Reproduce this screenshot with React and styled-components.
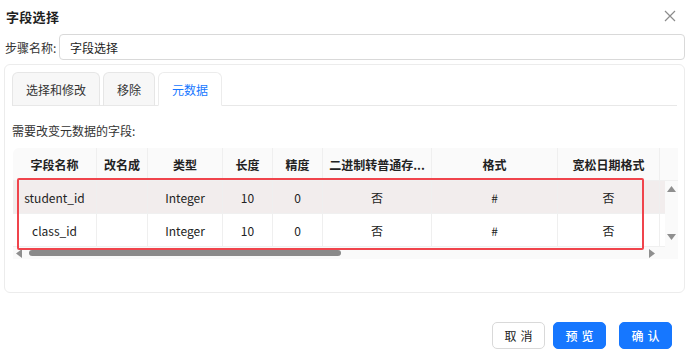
import styled, { createGlobalStyle } from 'styled-components'

const GlobalStyle = createGlobalStyle`
    html, body {
        margin: 0;
        padding: 0;
        background: #ffffff;
    }
    body {
        font-family: "Noto Sans CJK SC", "Noto Sans", sans-serif;
        color: #222;
    }
`

const columns = [
    { key: 'name', title: '字段名称', width: 84 },
    { key: 'rename', title: '改名成', width: 51 },
    { key: 'type', title: '类型', width: 75 },
    { key: 'length', title: '长度', width: 50 },
    { key: 'precision', title: '精度', width: 50 },
    { key: 'binary', title: '二进制转普通存...', width: 109 },
    { key: 'format', title: '格式', width: 126 },
    { key: 'lenient', title: '宽松日期格式', width: 102 },
]

const rows = [
    { name: 'student_id', rename: '', type: 'Integer', length: '10', precision: '0', binary: '否', format: '#', lenient: '否' },
    { name: 'class_id', rename: '', type: 'Integer', length: '10', precision: '0', binary: '否', format: '#', lenient: '否' },
]

const Dialog = styled.div`
    width: 690px;
    height: 362px;
    display: flex;
    flex-direction: column;
    box-sizing: border-box;
`

const Header = styled.div`
    height: 32px;
    display: flex;
    align-items: center;
    justify-content: space-between;
    padding: 0 13px 0 6px;
`

const Title = styled.h1`
    margin: 0;
    font-size: 13px;
    font-weight: 700;
    color: #1f1f1f;
    letter-spacing: 0.3px;
`

const CloseBtn = styled.button`
    width: 14px;
    height: 14px;
    padding: 0;
    border: none;
    background: none;
    display: flex;
    align-items: center;
    justify-content: center;
    cursor: pointer;
`

const StepRow = styled.div`
    display: flex;
    align-items: center;
    margin: 2px 5px 0 5px;
`

const StepLabel = styled.label`
    width: 54px;
    font-size: 12px;
    color: #333;
`

const StepInput = styled.div`
    flex: 1;
    height: 26px;
    box-sizing: border-box;
    border: 1px solid #d9d9d9;
    border-radius: 4px;
    display: flex;
    align-items: center;
    padding-left: 10px;
    font-size: 12px;
    color: #222;
`

const Panel = styled.div`
    margin: 4px 5px 0 4px;
    height: 229px;
    box-sizing: border-box;
    border: 1px solid #ececec;
    border-radius: 6px;
    padding: 7px 7px 0 7px;
    display: flex;
    flex-direction: column;
`

const TabBar = styled.div`
    display: flex;
    gap: 3px;
    border-bottom: 1px solid #e8e8e8;
    height: 33px;
`

const Tab = styled.div`
    height: 34px;
    box-sizing: border-box;
    padding: 0 13px;
    display: flex;
    align-items: center;
    font-size: 12px;
    border: 1px solid ${props => props.active ? '#ececec' : '#e6e6e6'};
    border-bottom: ${props => props.active ? '1px solid #fff' : '1px solid #e8e8e8'};
    border-radius: 6px 6px 0 0;
    background: ${props => props.active ? '#ffffff' : '#f7f7f7'};
    color: ${props => props.active ? '#1677ff' : '#333'};
`

const Hint = styled.div`
    margin-top: 16px;
    font-size: 12px;
    color: #333;
    line-height: 18px;
`

const TableBox = styled.div`
    position: relative;
    margin-top: 8px;
    width: 665px;
    margin-left: 1px;
`

const HeadRow = styled.div`
    display: flex;
    height: 33px;
    background: #fafafa;
    border-radius: 6px 6px 0 0;
    border-bottom: 1px solid #f0f0f0;
    box-sizing: border-box;
`

const HeadCell = styled.div`
    width: ${props => props.w}px;
    flex: none;
    box-sizing: border-box;
    display: flex;
    align-items: center;
    justify-content: center;
    font-size: 12px;
    font-weight: 700;
    color: #222;
    white-space: nowrap;
    overflow: hidden;
    border-right: 1px solid #efefef;
`

const Gutter = styled.div`
    flex: 1;
    background: #fafafa;
`

const BodyWrap = styled.div`
    display: flex;
`

const BodyRows = styled.div`
    width: 652px;
`

const Row = styled.div`
    display: flex;
    height: 33px;
    background: ${props => props.hover ? '#f2eded' : '#ffffff'};
    border-bottom: 1px solid #f0f0f0;
    box-sizing: border-box;
`

const Cell = styled.div`
    width: ${props => props.w}px;
    flex: none;
    box-sizing: border-box;
    display: flex;
    align-items: center;
    justify-content: center;
    font-size: 12px;
    color: #222;
    border-right: 1px solid #efefef;
`

const VScroll = styled.div`
    flex: 1;
    background: #fafafa;
    display: flex;
    flex-direction: column;
    justify-content: space-between;
    align-items: center;
    padding: 4px 0 5px;
`

const HScroll = styled.div`
    height: 12px;
    display: flex;
    align-items: center;
    background: #fafafa;
    padding: 0 2px;
    gap: 5px;
`

const Thumb = styled.div`
    width: 312px;
    height: 6px;
    border-radius: 3px;
    background: #8a8a8a;
`

const ScrollSpacer = styled.div`
    flex: 1;
`

const Highlight = styled.div`
    position: absolute;
    left: 4px;
    top: 30px;
    width: 627px;
    height: 72px;
    box-sizing: border-box;
    border: 2px solid #f0444c;
    border-radius: 2px;
    pointer-events: none;
`

const Footer = styled.div`
    margin-top: auto;
    height: 39px;
    display: flex;
    justify-content: flex-end;
    align-items: flex-start;
    padding-right: 18px;
    margin-bottom: 1px;
`

const Button = styled.button`
    width: 53px;
    height: 27px;
    margin-left: ${props => props.gap}px;
    box-sizing: border-box;
    border-radius: 5px;
    font-family: "Noto Sans CJK SC", "Noto Sans", sans-serif;
    font-size: 12px;
    letter-spacing: 4px;
    text-indent: 4px;
    cursor: pointer;
    border: 1px solid ${props => props.primary ? '#1677ff' : '#d9d9d9'};
    background: ${props => props.primary ? '#1677ff' : '#ffffff'};
    color: ${props => props.primary ? '#ffffff' : '#222'};
    font-weight: ${props => props.primary ? 500 : 400};
`

const Arrow = ({ dir }) => {
    const pts = {
        up: '0,7 4.5,1 9,7',
        down: '0,1 4.5,7 9,1',
        left: '7,0 1,4.5 7,9',
        right: '1,0 7,4.5 1,9',
    }[dir]
    return <svg width="9" height="9" viewBox="0 0 9 9"><polygon points={pts} fill="#8f8f8f" /></svg>
}

const App = () => {
    return <>
        <GlobalStyle />
        <Dialog>
            <Header>
                <Title>字段选择</Title>
                <CloseBtn>
                    <svg width="12" height="12" viewBox="0 0 12 12">
                        <path d="M1 1 L11 11 M11 1 L1 11" stroke="#8c8c8c" strokeWidth="1.2" fill="none" />
                    </svg>
                </CloseBtn>
            </Header>
            <StepRow>
                <StepLabel>步骤名称:</StepLabel>
                <StepInput>字段选择</StepInput>
            </StepRow>
            <Panel>
                <TabBar>
                    <Tab>选择和修改</Tab>
                    <Tab>移除</Tab>
                    <Tab active>元数据</Tab>
                </TabBar>
                <Hint>需要改变元数据的字段:</Hint>
                <TableBox>
                    <HeadRow>
                        {columns.map(c => <HeadCell key={c.key} w={c.width}>{c.title}</HeadCell>)}
                        <Gutter />
                    </HeadRow>
                    <BodyWrap>
                        <BodyRows>
                            {rows.map((r, i) => <Row key={i} hover={i === 0}>
                                {columns.map(c => <Cell key={c.key} w={c.width}>{r[c.key]}</Cell>)}
                            </Row>)}
                        </BodyRows>
                        <VScroll>
                            <Arrow dir="up" />
                            <Arrow dir="down" />
                        </VScroll>
                    </BodyWrap>
                    <HScroll>
                        <Arrow dir="left" />
                        <Thumb />
                        <ScrollSpacer />
                        <Arrow dir="right" />
                        <div style={{ width: 14 }} />
                    </HScroll>
                    <Highlight />
                </TableBox>
            </Panel>
            <Footer>
                <Button>取消</Button>
                <Button primary gap={8}>预览</Button>
                <Button primary gap={13}>确认</Button>
            </Footer>
        </Dialog>
    </>
}

export default App
